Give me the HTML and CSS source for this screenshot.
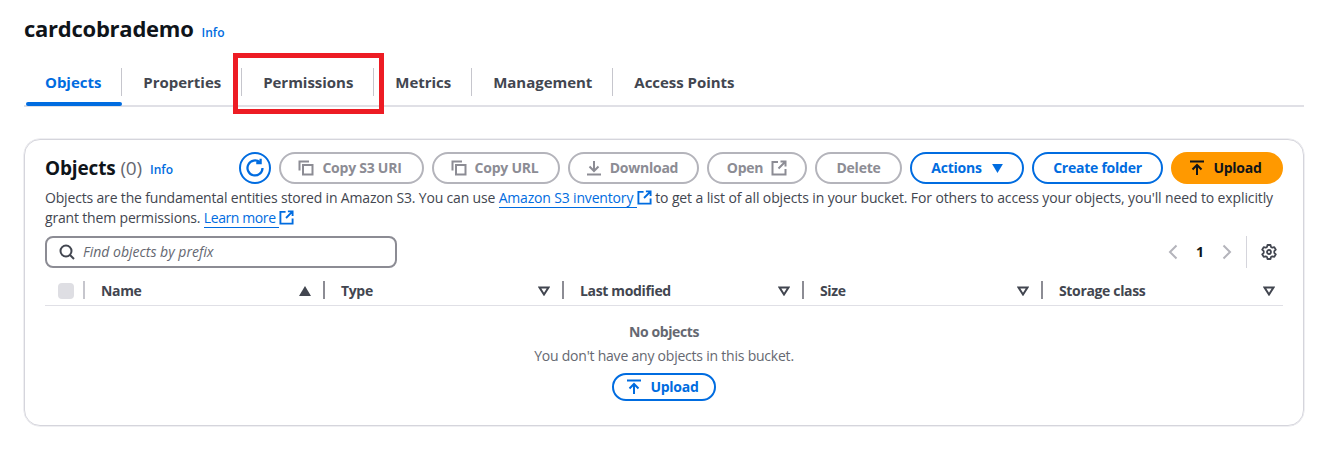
FILE: index.html
```html
<!DOCTYPE html>
<html lang="en">
<head>
<meta charset="utf-8">
<title>cardcobrademo</title>
<link rel="stylesheet" href="styles.css">
</head>
<body>
<svg class="defs" width="0" height="0" aria-hidden="true">
  <symbol id="copy" viewBox="0 0 16 16"><path d="M5 5h9.500v9.500H5zM1.500 10.500V1.500h9.500" fill="none" stroke="currentColor" stroke-width="2"/></symbol>
  <symbol id="ext" viewBox="0 0 16 16"><path d="M7 2H1.500v12.500h13V9M9.500 1.500h5v5M14.500 1.500 7.500 8.500" fill="none" stroke="currentColor" stroke-width="2"/></symbol>
  <symbol id="up" viewBox="0 0 16 16"><path d="M1 1.500h14M8 15V5M3.500 9.500 8 5l4.500 4.500" fill="none" stroke="currentColor" stroke-width="2"/></symbol>
</svg>
<main class="page">
  <header class="title-row">
    <h1>cardcobrademo</h1>
    <a class="info">Info</a>
  </header>
  <nav class="tabs">
    <a class="tab active">Objects</a>
    <a class="tab">Properties</a>
    <a class="tab">Permissions</a>
    <a class="tab">Metrics</a>
    <a class="tab">Management</a>
    <a class="tab last">Access Points</a>
    <span class="highlight"></span>
  </nav>
  <section class="card">
    <div class="card-head">
      <h2>Objects <span class="count">(0)</span></h2>
      <a class="info info-card">Info</a>
      <div class="actions">
        <button class="btn refresh" aria-label="Refresh"><svg class="ic-refresh" viewBox="0 0 16 16"><path d="M14 8a6 6 0 1 1-2-4.500M12.500 .5v3.500H9" fill="none" stroke="currentColor" stroke-width="1.800"/></svg></button>
        <button class="btn off lead w145"><svg class="ic"><use href="#copy"/></svg>Copy S3 URI</button>
        <button class="btn off lead w128"><svg class="ic"><use href="#copy"/></svg>Copy URL</button>
        <button class="btn off lead w131"><svg class="ic" viewBox="0 0 16 16"><path d="M1 14.500h14M8 1v10M3.500 6.500 8 11l4.500-4.500" fill="none" stroke="currentColor" stroke-width="2"/></svg>Download</button>
        <button class="btn off w100">Open<svg class="ic after"><use href="#ext"/></svg></button>
        <button class="btn off w87">Delete</button>
        <button class="btn line w114">Actions<svg class="caret" viewBox="0 0 12 10"><path d="M0 0h12L6 10z" fill="currentColor"/></svg></button>
        <button class="btn line w131">Create folder</button>
        <button class="btn primary lead w112"><svg class="ic"><use href="#up"/></svg>Upload</button>
      </div>
    </div>
    <div class="desc">
      <p class="desc-line">Objects are the fundamental entities stored in Amazon S3. You can use <a class="ext-link"><span>Amazon S3 inventory </span><svg class="ic-link"><use href="#ext"/></svg></a> <span class="desc-tail">to get a list of all objects in your bucket. For others to access your objects, you'll need to explicitly</span></p>
      <p class="desc-line">grant them permissions. <a class="ext-link tight"><span>Learn more </span><svg class="ic-link"><use href="#ext"/></svg></a></p>
    </div>
    <div class="tools">
      <label class="search">
        <svg class="ic-search" viewBox="0 0 16 16"><circle cx="7" cy="7" r="5.500" fill="none" stroke="currentColor" stroke-width="2"/><path d="m11 11 4 4" stroke="currentColor" stroke-width="2"/></svg>
        <span>Find objects by prefix</span>
      </label>
      <div class="pager">
        <svg class="chev" viewBox="0 0 10 16"><path d="M8.500 1.500 2 8l6.500 6.500" fill="none" stroke="currentColor" stroke-width="2"/></svg>
        <b>1</b>
        <svg class="chev" viewBox="0 0 10 16"><path d="M1.500 1.500 8 8l-6.500 6.500" fill="none" stroke="currentColor" stroke-width="2"/></svg>
        <i class="pager-sep"></i>
        <svg class="gear" viewBox="0 0 16 16"><path d="M6.500 1h3l.5 2 1.300.7 2-.6 1.500 2.600-1.500 1.400v1.800l1.500 1.400-1.500 2.600-2-.6-1.300.7-.5 2h-3l-.5-2-1.300-.7-2 .6-1.500-2.600 1.500-1.400V7.100L1.200 5.700l1.500-2.600 2 .6L6 3z" fill="none" stroke="currentColor" stroke-width="1.800" stroke-linejoin="round"/><circle cx="8" cy="8" r="2" fill="none" stroke="currentColor" stroke-width="1.800"/></svg>
      </div>
    </div>
    <div class="thead">
      <div class="th th-check"><i class="checkbox"></i></div>
      <div class="th">Name<svg class="sort" viewBox="0 0 12 10"><path d="M6 0l6 10H0z" fill="currentColor"/></svg></div>
      <div class="th">Type<svg class="sort" viewBox="0 0 12 10"><path d="M1.500 1.500h9L6 8.500z" fill="none" stroke="currentColor" stroke-width="2"/></svg></div>
      <div class="th">Last modified<svg class="sort" viewBox="0 0 12 10"><path d="M1.500 1.500h9L6 8.500z" fill="none" stroke="currentColor" stroke-width="2"/></svg></div>
      <div class="th">Size<svg class="sort" viewBox="0 0 12 10"><path d="M1.500 1.500h9L6 8.500z" fill="none" stroke="currentColor" stroke-width="2"/></svg></div>
      <div class="th th-last">Storage class<svg class="sort" viewBox="0 0 12 10"><path d="M1.500 1.500h9L6 8.500z" fill="none" stroke="currentColor" stroke-width="2"/></svg></div>
    </div>
    <div class="empty">
      <strong>No objects</strong>
      <p>You don't have any objects in this bucket.</p>
      <button class="btn line lead upload-small"><svg class="ic"><use href="#up"/></svg>Upload</button>
    </div>
  </section>
</main>
</body>
</html>
```
FILE: styles.css
```css
* { box-sizing: border-box; }
html, body { margin: 0; background: #fff; }
body { font-family: "Open Sans", "Noto Sans", "Liberation Sans", sans-serif; color: #424650; font-size: 14px; line-height: 20px; overflow: hidden; }
.defs { position: absolute; }
.page { padding: 14px 36px 0 24px; width: 1340px; height: 467px; }

.title-row { display: flex; align-items: baseline; gap: 8px; height: 29px; }
h1 { margin: 0; font-size: 22px; line-height: 29px; font-weight: 700; color: #0f141a; letter-spacing: -.25px; }
.info { color: #006ce0; font-size: 12px; font-weight: 600; }

.tabs { position: relative; display: flex; height: 64px; padding: 27px 0 0 0; border-bottom: 2px solid #e0e0e6; }
.tab { position: relative; height: 35px; padding: 0 21px; font-size: 15px; font-weight: 700; line-height: 25px; color: #424650; white-space: nowrap; letter-spacing: -.03px; }
.tab::after { content: ""; position: absolute; right: 0; top: -2px; height: 28px; width: 1px; background: #c6c6cd; }
.tab.last::after { display: none; }
.tab.active { color: #006ce0; margin-left: 2px; padding: 0 21px 0 19px; }
.tab.active::before { content: ""; position: absolute; left: 0; right: 0; bottom: -1px; height: 4px; border-radius: 2px; background: #006ce0; }
.highlight { position: absolute; left: 209px; top: 10px; width: 151px; height: 61px; border: 5px solid #ed1c24; }

.card { margin-top: 32px; height: 287px; border: 1px solid #d5d5dc; border-radius: 16px; padding: 12px 20px 0; box-shadow: 0 0 0 .5px #e0e0e6; }
.card-head { display: flex; align-items: center; height: 32px; }
h2 { margin: 0; font-size: 19px; font-weight: 700; line-height: 32px; color: #0f141a; letter-spacing: -.15px; white-space: nowrap; }
.count { font-weight: 400; color: #656871; }
.info-card { margin-left: 8px; padding-top: 4px; }
.actions { display: flex; gap: 8px; margin-left: auto; }
.btn { display: inline-flex; align-items: center; justify-content: center; height: 32px; border-radius: 16px; border: 2px solid; background: #fff; font: 700 14px/20px "Open Sans", "Noto Sans", sans-serif; white-space: nowrap; padding: 0; letter-spacing: -.25px; }
.off { color: #8c8c94; border-color: #b4b4bb; }
.lead { padding-right: 3px; }
.line { color: #006ce0; border-color: #006ce0; }
.primary { background: #ff9900; border-color: #ff9900; color: #0f141a; }
.refresh { width: 32px; color: #006ce0; border-color: #006ce0; }
.ic-refresh { width: 20px; height: 20px; }
.w145 { width: 145px; } .w128 { width: 128px; } .w131 { width: 131px; } .w100 { width: 100px; }
.w87 { width: 87px; } .w114 { width: 114px; } .w112 { width: 112px; }
.ic { width: 16px; height: 16px; margin-right: 8px; flex: none; }
.ic.after { margin: 0 0 0 8px; }
.caret { width: 11px; height: 9px; margin-left: 10px; }

.desc { margin-top: 4px; height: 40px; }
.desc-line { margin: 0; font-size: 14px; line-height: 20px; color: #424650; letter-spacing: -.17px; white-space: nowrap; }
.desc-tail { letter-spacing: -.12px; }
.ext-link { color: #006ce0; }
.ext-link span { border-bottom: 1px solid #006ce0; }
.tight { letter-spacing: -.4px; }
.ic-link { width: 15px; height: 15px; vertical-align: -2px; }

.tools { display: flex; align-items: center; justify-content: space-between; height: 32px; margin-top: 8px; }
.search { display: flex; align-items: center; width: 352px; height: 32px; border: 2px solid #8c8c94; border-radius: 8px; padding-left: 12px; gap: 8px; }
.search span { font-style: italic; font-size: 14px; color: #656871; }
.ic-search { width: 16px; height: 16px; color: #424650; }
.pager { display: flex; align-items: center; height: 32px; }
.chev { width: 10px; height: 16px; color: #b4b4bb; }
.pager b { width: 44px; text-align: center; color: #0f141a; font-size: 14px; }
.pager-sep { width: 1px; height: 32px; background: #d5d5dc; margin: 0 14px; }
.gear { width: 16px; height: 16px; color: #424650; margin-right: 6px; }

.thead { display: grid; grid-template-columns: 40px 240px 239px 240px 239px 240px; height: 28px; margin-top: 10px; border-bottom: 1px solid #e0e0e6; }
.th { position: relative; display: flex; align-items: center; justify-content: space-between; height: 26px; padding: 0 14px 0 16px; font-weight: 700; font-size: 14px; letter-spacing: -.35px; color: #424650; white-space: nowrap; }
.th::after { content: ""; position: absolute; right: 0; top: 3px; height: 18px; width: 2px; background: #8c8c94; }
.th-last { padding-right: 8px; }
.th-last::after { display: none; }
.th-check { padding: 0; }
.checkbox { width: 16px; height: 16px; margin-left: 13px; border-radius: 4px; background: #dedee3; }
.th-check::after { background: #c6c6cd; }
.sort { width: 12px; height: 10px; }

.empty { display: flex; flex-direction: column; align-items: center; padding-top: 16px; text-align: center; color: #656871; }
.empty strong { font-size: 14px; line-height: 20px; font-weight: 700; letter-spacing: -.4px; }
.empty p { margin: 4px 0 0; font-size: 14px; line-height: 20px; letter-spacing: -.22px; }
.upload-small { width: 104px; height: 28px; margin-top: 7px; }
```
